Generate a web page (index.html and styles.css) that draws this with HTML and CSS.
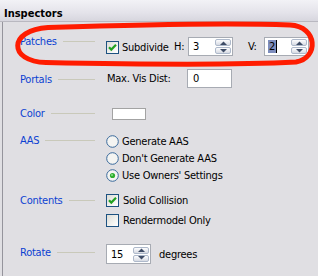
FILE: index.html
```html
<!DOCTYPE html>
<html>
<head>
<meta charset="utf-8">
<link rel="stylesheet" href="styles.css">
</head>
<body>
<div class="header">Inspectors</div>
<div class="panel">
  <div class="row row-patches">
    <div class="label"><span>Patches</span><i class="rule"></i></div>
    <div class="controls">
      <div class="check check-sub"><span class="box"><svg width="11" height="11" viewBox="0 0 11 11"><path d="M2 5.2 L4.3 7.6 L9 2.8" fill="none" stroke="#21a121" stroke-width="2.2"/></svg></span>Subdivide</div>
      <span class="axis axis-h">H:</span>
      <div class="spin spin-h"><span class="val">3</span><span class="btns"><span class="btn"><svg width="7" height="4" viewBox="0 0 7 4"><path d="M0 4 L3.5 0.5 L7 4 Z" fill="#3e4c66"/></svg></span><span class="btn"><svg width="7" height="4" viewBox="0 0 7 4"><path d="M0 0 L3.5 3.5 L7 0 Z" fill="#3e4c66"/></svg></span></span></div>
      <span class="axis axis-v">V:</span>
      <div class="spin spin-v"><span class="val"><span class="sel">2</span><span class="caret"></span></span><span class="btns"><span class="btn"><svg width="7" height="4" viewBox="0 0 7 4"><path d="M0 4 L3.5 0.5 L7 4 Z" fill="#3e4c66"/></svg></span><span class="btn"><svg width="7" height="4" viewBox="0 0 7 4"><path d="M0 0 L3.5 3.5 L7 0 Z" fill="#3e4c66"/></svg></span></span></div>
    </div>
  </div>

  <div class="row row-portals">
    <div class="label"><span>Portals</span><i class="rule"></i></div>
    <div class="controls">
      <span class="field-label">Max. Vis Dist:</span>
      <div class="textbox">0</div>
    </div>
  </div>

  <div class="row row-color">
    <div class="label"><span>Color</span><i class="rule"></i></div>
    <div class="controls">
      <div class="swatch"></div>
    </div>
  </div>

  <div class="row row-aas">
    <div class="label"><span>AAS</span><i class="rule"></i></div>
    <div class="controls stack">
      <div class="radio"><svg width="13" height="13" viewBox="0 0 13 13"><circle cx="6.5" cy="6.5" r="5.8" fill="#f4f4f2" stroke="#3a6a9c" stroke-width="1"/></svg>Generate AAS</div>
      <div class="radio"><svg width="13" height="13" viewBox="0 0 13 13"><circle cx="6.5" cy="6.5" r="5.8" fill="#f4f4f2" stroke="#3a6a9c" stroke-width="1"/></svg>Don't Generate AAS</div>
      <div class="radio"><svg width="13" height="13" viewBox="0 0 13 13"><circle cx="6.5" cy="6.5" r="5.8" fill="#f4f4f2" stroke="#3a6a9c" stroke-width="1"/><circle cx="6.5" cy="6.5" r="2.6" fill="#2fae2f"/><circle cx="6" cy="6" r="1" fill="#8ee08e"/></svg>Use Owners' Settings</div>
    </div>
  </div>

  <div class="row row-contents">
    <div class="label"><span>Contents</span><i class="rule"></i></div>
    <div class="controls stack">
      <div class="check check-item"><span class="box"><svg width="11" height="11" viewBox="0 0 11 11"><path d="M2 5.2 L4.3 7.6 L9 2.8" fill="none" stroke="#21a121" stroke-width="2.2"/></svg></span>Solid Collision</div>
      <div class="check check-item"><span class="box"></span>Rendermodel Only</div>
    </div>
  </div>

  <div class="row row-rotate">
    <div class="label"><span>Rotate</span><i class="rule"></i></div>
    <div class="controls">
      <div class="spin spin-r"><span class="val">15</span><span class="btns"><span class="btn"><svg width="7" height="4" viewBox="0 0 7 4"><path d="M0 4 L3.5 0.5 L7 4 Z" fill="#3e4c66"/></svg></span><span class="btn"><svg width="7" height="4" viewBox="0 0 7 4"><path d="M0 0 L3.5 3.5 L7 0 Z" fill="#3e4c66"/></svg></span></span></div>
      <span class="unit">degrees</span>
    </div>
  </div>
</div>
<svg class="ring" width="318" height="276" viewBox="0 0 318 276"><path d="M48 27.5 C 140 24.5, 240 23, 290 25 C 318 26.5, 319 58, 296 62 C 230 65.5, 120 64, 46 62.5 C 8 61.5, 8 30, 48 27.5 Z" fill="none" stroke="#ff1c00" stroke-width="5"/></svg>
</body>
</html>
```
FILE: styles.css
```css
* { box-sizing: border-box; }
html, body { margin: 0; padding: 0; }
body {
  width: 318px;
  height: 276px;
  overflow: hidden;
  position: relative;
  background: #e0dfe3;
  color: #000;
  font-family: "DejaVu Sans Condensed", "DejaVu Sans", sans-serif;
  font-stretch: condensed;
  font-size: 11px;
  line-height: 13px;
  letter-spacing: -0.25px;
}
.header {
  height: 22px;
  padding: 7px 0 0 4px;
  font-weight: bold;
  letter-spacing: 0;
  background: linear-gradient(#f2f2f6, #e4e3ea 60%, #d7d6de);
  border-bottom: 1px solid #b9b8c0;
}
.panel {
  margin-left: 2px;
  height: 254px;
  border-left: 1px solid #95949c;
  padding: 14px 0 0 17px;
}
.row { display: flex; align-items: flex-start; }
.label {
  width: 75px;
  display: flex;
  align-items: center;
  color: #0c3fd2;
  flex: none;
}
.rule {
  flex: 1;
  height: 1px;
  margin-left: 6px;
  background: #c9c9ba;
}
.controls { margin-left: 11px; display: flex; align-items: center; }
.stack { flex-direction: column; align-items: flex-start; }

.row-patches { height: 19px; }
.row-patches .label { margin-top: -1px; }
.row-portals { margin-top: 14px; height: 19px; }
.row-portals .label { margin-top: 4px; }
.row-color { margin-top: 18px; }
.row-color .label { margin-top: 1px; }
.row-aas { margin-top: 13px; }
.row-aas .label { margin-top: 1px; }
.row-contents { margin-top: 9px; }
.row-contents .label { margin-top: 1px; }
.row-rotate { margin-top: 11px; }
.row-rotate .label { margin-top: 2px; }

.controls > * { flex: none; }

.check { display: flex; align-items: center; }
.box {
  width: 13px;
  height: 13px;
  border: 1px solid #1d5281;
  background: linear-gradient(135deg, #dcdcd6, #f6f6f4 70%, #fff);
  margin-right: 3px;
  display: flex;
  align-items: center;
  justify-content: center;
  flex: none;
}
.check-sub { width: 68px; height: 19px; margin-top: 2px; }
.check-item { height: 13px; margin-top: 1px; margin-bottom: 6px; }
.check-item .box { margin-right: 4px; }

.axis { height: 19px; display: flex; align-items: center; }
.axis-h { width: 14px; }
.axis-v { width: 16px; margin-left: 15px; }

.spin {
  height: 19px;
  border: 1px solid #a7abb3;
  background: #fff;
  display: flex;
  align-items: center;
  padding: 0 0 0 4px;
}
.spin-h { width: 45px; }
.spin-v { width: 45px; }
.spin-r { width: 45px; height: 20px; }
.val { flex: 1; display: flex; align-items: center; }
.sel { background: #7d8dbd; padding: 0 1px; margin-left: -1px; }
.caret { width: 1px; height: 13px; background: #000; }
.btns { display: flex; flex-direction: column; gap: 1px; margin-right: 1px; }
.btn {
  width: 16px;
  height: 7px;
  border: 1px solid #aeb9cb;
  border-radius: 2px;
  background: linear-gradient(#fdfdfe, #d6dae3);
  display: flex;
  align-items: center;
  justify-content: center;
}
.btn svg { display: block; }

.field-label { width: 80px; margin-left: 1px; }
.textbox {
  width: 45px;
  height: 19px;
  border: 1px solid #a7abb3;
  background: #fff;
  padding: 2px 0 0 5px;
}
.swatch {
  width: 34px;
  height: 12px;
  margin-left: 6px;
  margin-top: 2px;
  border: 1px solid #a3a3a3;
  background: #fff;
}
.radio { height: 17px; display: flex; align-items: center; }
.radio svg { display: block; margin-right: 3px; flex: none; }
.unit { margin-left: 8px; }

.ring { position: absolute; left: 0; top: 0; pointer-events: none; }
```
